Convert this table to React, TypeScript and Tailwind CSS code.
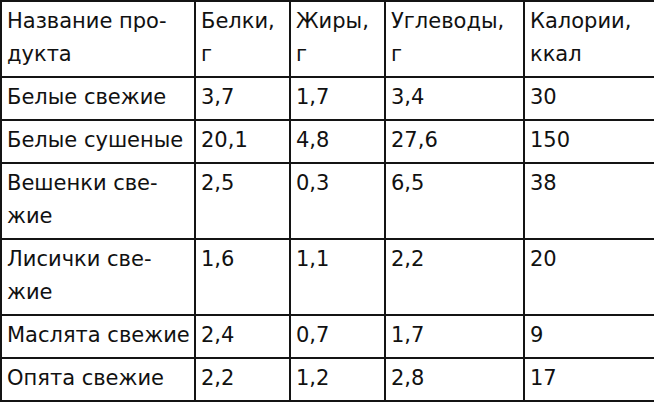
const rows: [React.ReactNode, string, string, string, string][] = [
  ["Белые свежие", "3,7", "1,7", "3,4", "30"],
  ["Белые сушеные", "20,1", "4,8", "27,6", "150"],
  [<>Вешенки све-<br />жие</>, "2,5", "0,3", "6,5", "38"],
  [<>Лисички све-<br />жие</>, "1,6", "1,1", "2,2", "20"],
  ["Маслята свежие", "2,4", "0,7", "1,7", "9"],
  ["Опята свежие", "2,2", "1,2", "2,8", "17"],
];

const cell = "border-[2.5px] border-[#141414] px-[5px] pt-[3px] pb-[5px] align-top whitespace-nowrap";

export default function App() {
  return (
    <div className="w-[654px] h-[404px] bg-white">
      <table
        className="w-[654px] table-fixed border-collapse text-[21px] leading-[33px] text-[#111]"
        style={{ fontFamily: '"DejaVu Sans", sans-serif' }}
      >
        <colgroup>
          <col className="w-[194px]" />
          <col className="w-[95px]" />
          <col className="w-[95px]" />
          <col className="w-[139px]" />
          <col className="w-[131px]" />
        </colgroup>
        <thead>
          <tr>
            <th className={`${cell} text-left font-normal`}>
              Название про-<br />дукта
            </th>
            <th className={`${cell} text-left font-normal`}>
              Белки,<br />г
            </th>
            <th className={`${cell} text-left font-normal`}>
              Жиры,<br />г
            </th>
            <th className={`${cell} text-left font-normal`}>
              Углеводы,<br />г
            </th>
            <th className={`${cell} text-left font-normal`}>
              Калории,<br />ккал
            </th>
          </tr>
        </thead>
        <tbody>
          {rows.map((r, i) => (
            <tr key={i}>
              {r.map((v, j) => (
                <td key={j} className={cell}>
                  {v}
                </td>
              ))}
            </tr>
          ))}
        </tbody>
      </table>
    </div>
  );
}
